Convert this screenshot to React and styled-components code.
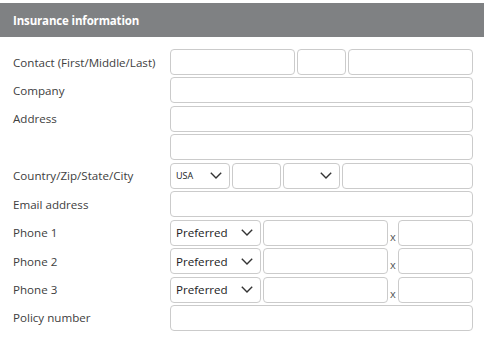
import styled, { createGlobalStyle } from "styled-components";

const GlobalStyle = createGlobalStyle`
  body {
    margin: 0;
    background: #ffffff;
    font-family: "Open Sans", "Noto Sans", sans-serif;
  }
`;

const Chevron = () => (
  <svg width="12" height="7" viewBox="0 0 12 7">
    <path d="M0.8 0.8 L6 6 L11.2 0.8" fill="none" stroke="#333" strokeWidth="1.4" />
  </svg>
);

export default function App() {
  return (
    <>
      <GlobalStyle />
      <Panel>
        <Header>Insurance information</Header>
        <Form>
          <Row>
            <Label>Contact (First/Middle/Last)</Label>
            <Fields>
              <Input w={125} />
              <Input w={49} />
              <Input w={125} />
            </Fields>
          </Row>
          <Row>
            <Label>Company</Label>
            <Fields>
              <Input grow />
            </Fields>
          </Row>
          <Row>
            <Label>Address</Label>
            <Fields>
              <Input grow />
            </Fields>
          </Row>
          <Row>
            <Label />
            <Fields>
              <Input grow />
            </Fields>
          </Row>
          <Row>
            <Label>Country/Zip/State/City</Label>
            <Fields>
              <Select w={60} small>
                <span>USA</span>
                <Chevron />
              </Select>
              <Input w={49} />
              <Select w={57}>
                <span />
                <Chevron />
              </Select>
              <Input grow />
            </Fields>
          </Row>
          <Row>
            <Label>Email address</Label>
            <Fields>
              <Input grow />
            </Fields>
          </Row>
          {["Phone 1", "Phone 2", "Phone 3"].map((p) => (
            <Row key={p}>
              <Label>{p}</Label>
              <Fields>
                <Select w={91}>
                  <span>Preferred</span>
                  <Chevron />
                </Select>
                <Input w={125} />
                <Ext>x</Ext>
                <Input grow />
              </Fields>
            </Row>
          ))}
          <Row>
            <Label>Policy number</Label>
            <Fields>
              <Input grow />
            </Fields>
          </Row>
        </Form>
      </Panel>
    </>
  );
}

const Panel = styled.div`
  width: 484px;
  padding-top: 3px;
`;

const Header = styled.div`
  height: 34px;
  background: #7f8183;
  color: #ffffff;
  font-weight: 700;
  font-size: 11.5px;
  letter-spacing: -0.15px;
  display: flex;
  align-items: center;
  padding-left: 13px;
`;

const Form = styled.div`
  display: flex;
  flex-direction: column;
  gap: 2.45px;
  padding-top: 12px;
  width: 473px;
`;

const Row = styled.div`
  display: grid;
  grid-template-columns: 170px 1fr;
  align-items: center;
`;

const Label = styled.div`
  padding-left: 13px;
  font-size: 11.6px;
  color: #404040;
  white-space: nowrap;
`;

const Fields = styled.div`
  display: flex;
  gap: 2px;
  align-items: center;
`;

const Input = styled.div`
  box-sizing: border-box;
  height: 26px;
  border: 1px solid #cbcbcb;
  border-radius: 4px;
  background: #ffffff;
  width: ${(p) => (p.w ? `${p.w}px` : "auto")};
  flex: ${(p) => (p.grow ? "1" : "none")};
`;

const Select = styled(Input)`
  display: flex;
  align-items: center;
  justify-content: space-between;
  padding: 0 7px 0 5px;
  font-size: ${(p) => (p.small ? "9px" : "11.6px")};
  color: #222;
`;

const Ext = styled.span`
  width: 6px;
  padding-top: 7px;
  font-size: 11px;
  color: #555;
  text-align: center;
`;
